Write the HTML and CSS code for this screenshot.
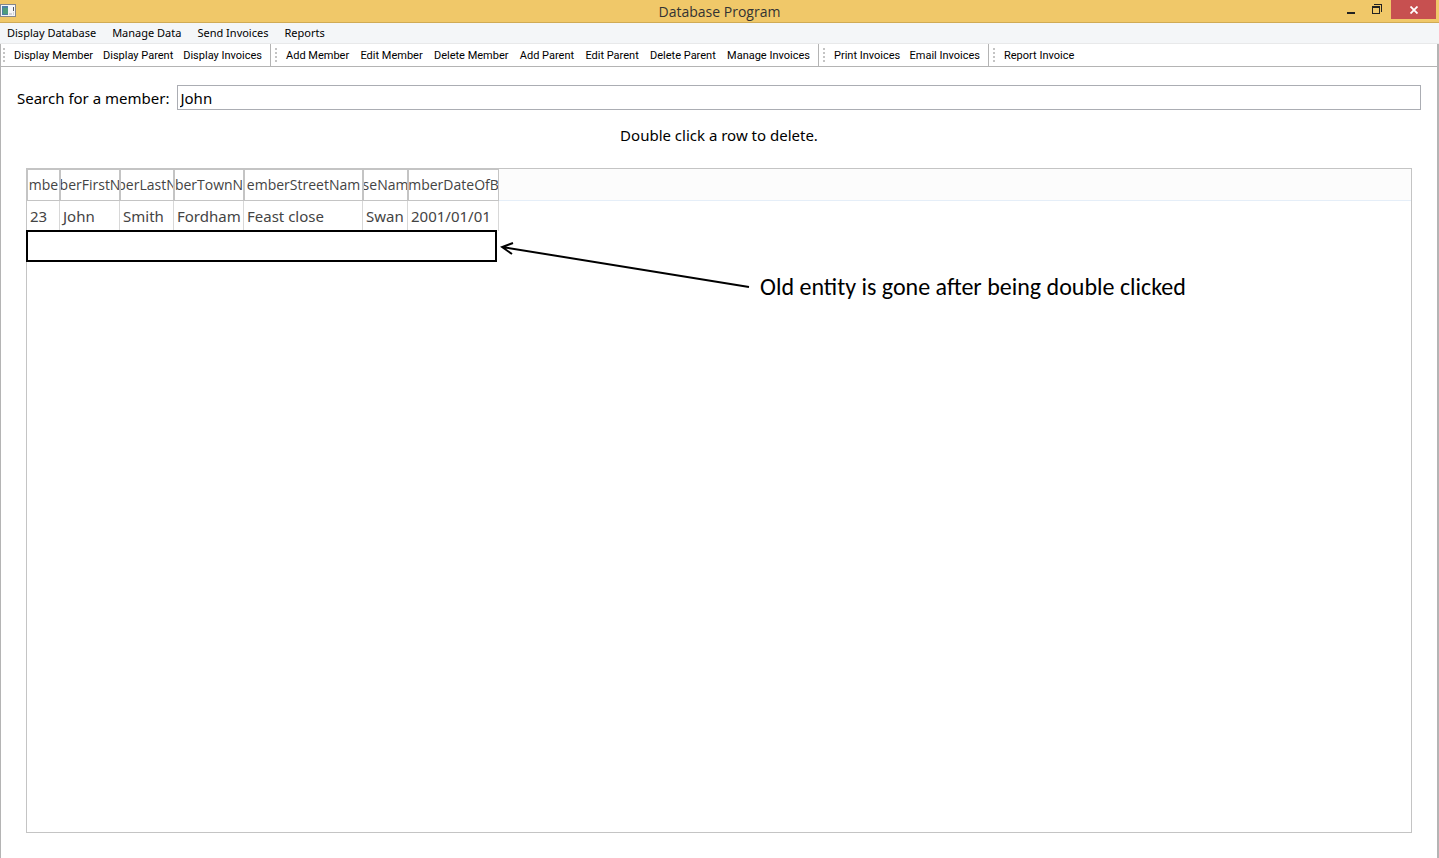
FILE: index.html
```html
<!DOCTYPE html>
<html lang="en">
<head>
<meta charset="utf-8">
<title>Database Program</title>
<link rel="stylesheet" href="styles.css">
</head>
<body>
<div class="window">
  <header class="titlebar">
    <svg class="app-icon" width="16" height="14" viewBox="0 0 16 14" aria-hidden="true">
      <rect x="0.5" y="0.5" width="15" height="12" fill="#f6f6f8" stroke="#85878c"/>
      <rect x="2" y="2" width="6" height="9" fill="#4c7fa5"/>
      <rect x="3" y="4" width="5" height="6" fill="#4f9d7c"/>
      <rect x="9" y="9" width="3" height="2" fill="#d2d5da"/>
      <rect x="13" y="3" width="1" height="4" fill="#55585e"/>
      <rect x="13" y="8" width="1" height="3" fill="#d2d5da"/>
    </svg>
    <h1 class="title">Database Program</h1>
    <div class="controls">
      <button class="control" type="button" aria-label="Minimize">
        <svg width="8" height="12" viewBox="0 0 8 12"><rect y="8" width="8" height="2" fill="#222"/></svg>
      </button>
      <button class="control" type="button" aria-label="Restore">
        <svg width="10" height="12" viewBox="0 0 10 12" fill="#222"><path fill-rule="evenodd" d="M0 2H8V10H0ZM1 4V9H7V4Z"/><path d="M2 0H10V8H9V1H2Z"/></svg>
      </button>
      <button class="control close" type="button" aria-label="Close">
        <svg width="8" height="8" viewBox="0 0 8 8"><path d="M0.5 0.5L7.5 7.5M7.5 0.5L0.5 7.5" stroke="#fff" stroke-width="1.8"/></svg>
      </button>
    </div>
  </header>
  <nav class="menubar">
    <button type="button">Display Database</button>
    <button type="button">Manage Data</button>
    <button type="button">Send Invoices</button>
    <button type="button">Reports</button>
  </nav>
  <div class="client">
    <div class="toolbars">
      <div class="toolbar display-tools">
        <button type="button">Display Member</button>
        <button type="button">Display Parent</button>
        <button type="button">Display Invoices</button>
      </div>
      <div class="toolbar manage-tools">
        <button type="button">Add Member</button>
        <button type="button">Edit Member</button>
        <button type="button">Delete Member</button>
        <button type="button">Add Parent</button>
        <button type="button">Edit Parent</button>
        <button type="button">Delete Parent</button>
        <button type="button">Manage Invoices</button>
      </div>
      <div class="toolbar invoice-tools">
        <button type="button">Print Invoices</button>
        <button type="button">Email Invoices</button>
      </div>
      <div class="toolbar report-tools">
        <button type="button">Report Invoice</button>
      </div>
    </div>
    <main class="content">
      <div class="search">
        <label for="member-search">Search for a member:</label>
        <input id="member-search" type="text" value="John">
      </div>
      <p class="hint">Double click a row to delete.</p>
      <section class="table-view">
        <div class="header-fill"></div>
        <table class="members">
          <colgroup>
            <col class="c-id"><col class="c-first"><col class="c-last"><col class="c-town"><col class="c-street"><col class="c-house"><col class="c-birth">
          </colgroup>
          <thead>
            <tr>
              <th><span>mbe</span></th>
              <th><span>berFirstN</span></th>
              <th><span>berLastN</span></th>
              <th><span>berTownN</span></th>
              <th><span>emberStreetNam</span></th>
              <th><span>seNam</span></th>
              <th><span>mberDateOfB</span></th>
            </tr>
          </thead>
          <tbody>
            <tr><td>23</td><td>John</td><td>Smith</td><td>Fordham</td><td>Feast close</td><td>Swan</td><td>2001/01/01</td></tr>
          </tbody>
        </table>
        <div class="empty-row"></div>
        <svg class="arrow" width="252" height="50" viewBox="0 0 252 50" fill="none" stroke="#000" stroke-width="2" aria-hidden="true">
          <path d="M2 8L249 48M13 4L2 8L12 15"/>
        </svg>
        <p class="note">Old entity is gone after being double clicked</p>
      </section>
    </main>
  </div>
</div>
</body>
</html>
```

FILE: styles.css
```css
* { box-sizing: border-box; }

body {
  margin: 0;
  background: #fff;
  color: #000;
  font: 15px/20px "Noto Sans", "Open Sans", sans-serif;
}

button {
  padding: 0;
  border: 0;
  background: none;
  color: inherit;
  font: inherit;
  white-space: nowrap;
}

.window {
  display: flex;
  flex-direction: column;
  min-height: 100vh;
}

.titlebar {
  display: grid;
  grid-template-columns: 1fr auto 1fr;
  height: 23px;
  background: #f0c869;
  border-bottom: 1px solid #d0ab55;
}

.app-icon { margin-top: 4px; }

.title {
  margin: 0;
  color: #333;
  font: 14px/23px "Open Sans", sans-serif;
}

.controls {
  display: flex;
  justify-content: flex-end;
  padding-right: 3px;
}

.control {
  display: flex;
  align-items: center;
  justify-content: center;
  width: 26px;
  height: 19px;
}

.control.close {
  width: 45px;
  margin-left: 1px;
  background: #c75050;
}

.menubar {
  display: flex;
  gap: 16px;
  height: 21px;
  padding-left: 7px;
  background: #f4f6f8;
  border-bottom: 1px solid #e8e9ea;
  font: 11px/20px "Noto Sans", sans-serif;
}

.client {
  display: flex;
  flex: 1;
  flex-direction: column;
  border-left: 1px solid #b4b4b4;
  border-right: 2px solid #b4b4b4;
}

.toolbars {
  display: flex;
  height: 23px;
  border-bottom: 1px solid #b4b4b4;
  font: 11px/20px Roboto, sans-serif;
}

.toolbar {
  position: relative;
  display: flex;
  justify-content: space-between;
  padding: 2px 8px 0 15px;
  border-right: 1px solid #b4b4b4;
}

.toolbar::before {
  content: "";
  position: absolute;
  top: 4px;
  left: 4px;
  width: 2px;
  height: 14px;
  background: repeating-linear-gradient(#c4c4c4 0 2px, transparent 2px 4px);
}

.display-tools { width: 270px; padding-left: 13px; }
.display-tools::before { left: 2px; }
.manage-tools { width: 548px; }
.invoice-tools { width: 170px; }
.report-tools { border-right: 0; }

.content {
  display: flex;
  flex: 1;
  flex-direction: column;
  padding: 18px 16px 25px;
}

.search {
  display: flex;
  align-items: center;
  gap: 8px;
}

.search input {
  flex: 1;
  min-width: 0;
  height: 25px;
  padding: 0 2px;
  border: 1px solid #abadb3;
  background: #fff;
  color: inherit;
  font: inherit;
}

.hint {
  margin: 15px 0 23px;
  text-align: center;
}

.table-view {
  position: relative;
  flex: 1;
  margin: 0 9px;
  border: 1px solid #c4c4c4;
}

.header-fill {
  position: absolute;
  top: 0;
  left: 0;
  right: 0;
  height: 32px;
  background: #fcfcfc;
  border-bottom: 1px solid #e5eef8;
}

.members {
  position: relative;
  width: 472px;
  table-layout: fixed;
  border-collapse: separate;
  border-spacing: 0;
  background: #fff;
  color: #444;
}

.c-id { width: 33px; }
.c-first { width: 60px; }
.c-last { width: 54px; }
.c-town { width: 70px; }
.c-street { width: 119px; }
.c-house { width: 45px; }
.c-birth { width: 91px; }

.members th {
  height: 32px;
  padding: 0;
  border: 1px solid #c4c4c4;
  overflow: hidden;
  font: 14px/30px "Open Sans", sans-serif;
}

.members th span {
  display: flex;
  justify-content: center;
  overflow: hidden;
  white-space: nowrap;
}

.members td {
  height: 30px;
  padding: 0 0 0 3px;
  border-right: 1px solid #d8d8d8;
  white-space: nowrap;
}

.empty-row {
  position: absolute;
  top: 61px;
  left: -1px;
  width: 471px;
  height: 32px;
  border: 2px solid #000;
  background: #fff;
}

.arrow {
  position: absolute;
  top: 70px;
  left: 473px;
}

.note {
  position: absolute;
  top: 104px;
  left: 733px;
  margin: 0;
  font: 24px/28px Carlito, Calibri, "Open Sans", sans-serif;
  white-space: nowrap;
}
```
